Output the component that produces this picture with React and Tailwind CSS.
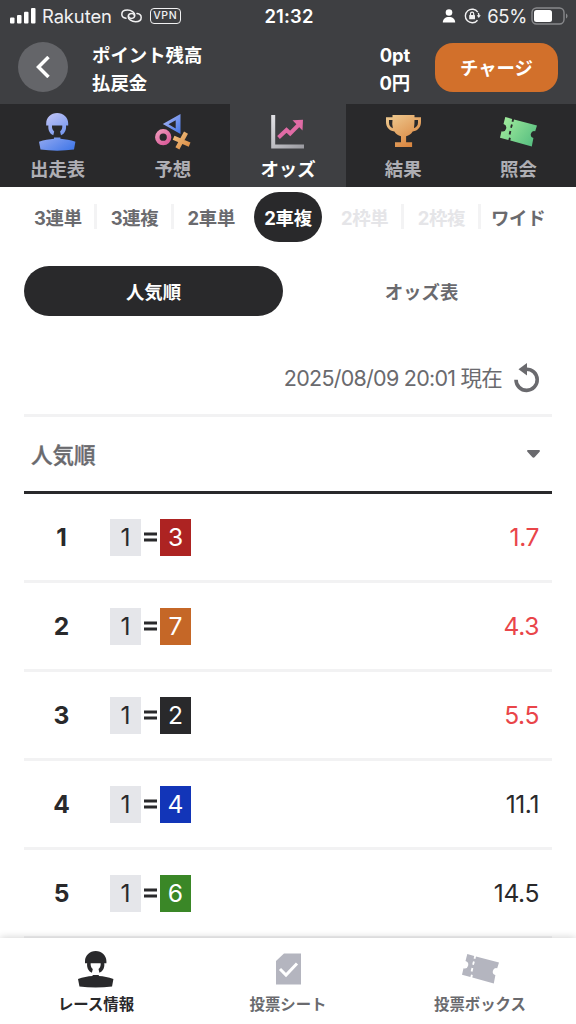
const tabs = [
  { label: "出走表", icon: RiderIcon },
  { label: "予想", icon: PredictIcon },
  { label: "オッズ", icon: OddsIcon, active: true },
  { label: "結果", icon: TrophyIcon },
  { label: "照会", icon: TicketIcon },
];

const betTypes = [
  { label: "3連単", divider: true },
  { label: "3連複", divider: true },
  { label: "2車単" },
  { label: "2車複", active: true },
  { label: "2枠単", disabled: true, divider: true },
  { label: "2枠複", disabled: true, divider: true },
  { label: "ワイド" },
];

const odds = [
  { rank: 1, second: 3, value: "1.7", color: "bg-[#ad2322]", hot: true },
  { rank: 2, second: 7, value: "4.3", color: "bg-[#c56727]", hot: true },
  { rank: 3, second: 2, value: "5.5", color: "bg-[#29292b]", hot: true },
  { rank: 4, second: 4, value: "11.1", color: "bg-[#1235b8]" },
  { rank: 5, second: 6, value: "14.5", color: "bg-[#3a8727]" },
];

function RiderShape({ fill }) {
  return (
    <g fill={fill}>
      <path d="M7.200 12.500V10.500C7.200 4.500 12 0 18.200 0s11 4.500 11 10.500v2H27c.5 4-1 8.200-5 9.800l-.9-3.800c1.700-1.400 2.400-3.400 2.200-6H13c-.2 2.600.5 4.600 2.200 6l-.9 3.800C10.400 20.700 8.900 16.500 9.400 12.500z" />
      <path d="M15 24.600h6.400v1.200c5 .4 9.800 1.200 15 3L35 36.500C24 38 12.200 38 1.500 36.500L0 28.800c5.200-1.800 10-2.600 15-3z" />
    </g>
  );
}

function RiderIcon() {
  return (
    <svg width="37" height="38" viewBox="0 0 37 38">
      <defs>
        <linearGradient id="rider" x1="6" y1="0" x2="30" y2="38" gradientUnits="userSpaceOnUse">
          <stop offset="0.1" stopColor="#b9c0f6" />
          <stop offset="1" stopColor="#4479e8" />
        </linearGradient>
      </defs>
      <RiderShape fill="url(#rider)" />
    </svg>
  );
}

function PredictIcon() {
  return (
    <svg width="36" height="36" viewBox="0 0 36 36" fill="none">
      <defs>
        <linearGradient id="tri" x1="8" y1="4" x2="26" y2="20" gradientUnits="userSpaceOnUse">
          <stop stopColor="#a9b5f5" />
          <stop offset="1" stopColor="#3f73e4" />
        </linearGradient>
        <linearGradient id="ring" x1="2" y1="14" x2="16" y2="32" gradientUnits="userSpaceOnUse">
          <stop stopColor="#f0a0be" />
          <stop offset="1" stopColor="#d74d92" />
        </linearGradient>
        <linearGradient id="cross" x1="20" y1="18" x2="34" y2="34" gradientUnits="userSpaceOnUse">
          <stop stopColor="#f0c283" />
          <stop offset="1" stopColor="#dc8b43" />
        </linearGradient>
      </defs>
      <path d="M7.800 10 25.500 0v20zM13.500 10.200l7.200 4.200V6.200z" fill="url(#tri)" fillRule="evenodd" />
      <circle cx="8.200" cy="23.200" r="5.900" stroke="url(#ring)" strokeWidth="4.500" />
      <path d="M18.600 23.800 34.600 30.600M31 18.600 22.400 34.400" stroke="url(#cross)" strokeWidth="4.500" />
    </svg>
  );
}

function OddsIcon() {
  return (
    <svg width="34" height="34" viewBox="0 0 34 34" fill="none">
      <defs>
        <linearGradient id="axis" x1="0" y1="0" x2="33" y2="34" gradientUnits="userSpaceOnUse">
          <stop stopColor="#e4e4e8" />
          <stop offset="1" stopColor="#98989e" />
        </linearGradient>
      </defs>
      <path d="M2.200 0v31.500H33" stroke="url(#axis)" strokeWidth="4" />
      <path d="m7.500 22.500 8-7.500 3.700 3.500L29 8.500" stroke="#e06ba5" strokeWidth="4" />
      <path d="M21.500 5.200 32 4.700 31.500 15.500z" fill="#e06ba5" />
    </svg>
  );
}

function TrophyIcon() {
  return (
    <svg width="35" height="33" viewBox="0 0 35 33">
      <defs>
        <linearGradient id="cup" x1="6" y1="0" x2="26" y2="32" gradientUnits="userSpaceOnUse">
          <stop stopColor="#edc78d" />
          <stop offset="1" stopColor="#d9833d" />
        </linearGradient>
      </defs>
      <path
        fill="url(#cup)"
        fillRule="evenodd"
        d="M6.500 0h22v2.200H35V7c0 5-3 8.700-8.300 9.500-1.500 2.500-3.700 4-6.600 4.700v6h6V32H9v-4.800h6v-6c-3-.7-5.100-2.200-6.600-4.700C3 15.700 0 12 0 7V2.200h6.500zM3 5v2.500c0 2.700 1.300 4.700 3.900 5.700A18 18 0 0 1 6.500 5zm25.500 0c0 3-.1 5.700-.6 8.200 2.700-1 4.100-3 4.100-5.700V5z"
      />
    </svg>
  );
}

function TicketShape({ fill }) {
  return (
    <path
      fill={fill}
      d="M5.300 0l6.900 1.900-.6 2.500 1.800.5.600-2.500L37 8.600l-1.800 5.600a3.500 3.500 0 0 0-1.800 6.800L31.800 29.500 10.300 23.600l.5-2.500-1.800-.5-.6 2.500L0 20.800l1.500-6.500a3.700 3.700 0 0 0 2-7.200zM11 7.300l-.8 3.200 1.700.5.900-3.200zM9.500 13.800l-.8 3.400 1.800.5.800-3.400z"
      fillRule="evenodd"
    />
  );
}

function TicketIcon() {
  return (
    <svg width="37" height="30" viewBox="0 0 37 30">
      <defs>
        <linearGradient id="ticket" x1="2" y1="4" x2="34" y2="28" gradientUnits="userSpaceOnUse">
          <stop stopColor="#a0eb9c" />
          <stop offset="1" stopColor="#55bd80" />
        </linearGradient>
      </defs>
      <TicketShape fill="url(#ticket)" />
    </svg>
  );
}

function StatusBar() {
  return (
    <div className="flex h-8 items-center pr-2 pl-2.5 text-[#f1f1f2]">
      <div className="flex flex-1 items-center">
        <svg width="26" height="16" viewBox="0 0 26 16" fill="#ffffff">
          <rect x="0" y="9.500" width="4.500" height="6" rx="1" />
          <rect x="7" y="7" width="4.500" height="8.500" rx="1" />
          <rect x="14" y="3.800" width="4.500" height="11.700" rx="1" />
          <rect x="21" y="0" width="4.500" height="15.500" rx="1" />
        </svg>
        <span className="ml-1.5 pt-px text-[18.400px] tracking-[-0.100px]">Rakuten</span>
        <svg className="ml-[9px]" width="21" height="14" viewBox="0 0 21 14" fill="none" stroke="currentColor" strokeWidth="1.500" strokeLinecap="round">
          <path d="M5 9.200C2.300 8.900.8 7.300.8 5.300c0-2.500 2.300-4.200 5.600-4.200 4 0 7.400 2.300 7.400 5 0 2-1.500 3.300-3.500 3.300-1.700 0-2.600-.9-2.600-2.200" />
          <path d="M16 4.600c2.700.3 4.200 1.900 4.200 3.900 0 2.500-2.300 4.200-5.600 4.200-4 0-7.400-2.300-7.400-5 0-2 1.500-3.300 3.500-3.300 1.700 0 2.600.9 2.600 2.200" />
        </svg>
        <span className="ml-2 flex h-4 w-[31px] items-center justify-center rounded-[4px] border-[1.500px] border-current text-[10.500px] font-medium tracking-[0.700px]">
          VPN
        </span>
      </div>
      <span className="pt-px text-[18.400px] font-semibold tracking-[0.200px] text-white">21:32</span>
      <div className="flex flex-1 items-center justify-end">
        <svg width="14" height="14" viewBox="0 0 14 14" fill="#ffffff">
          <circle cx="7" cy="3.500" r="3.300" />
          <path d="M.8 13.500c0-3.500 2.500-5.500 6.200-5.500s6.200 2 6.200 5.500z" />
        </svg>
        <svg className="ml-2" width="17" height="16" viewBox="0 0 17 16" fill="none" stroke="currentColor" strokeWidth="1.400">
          <path d="M13.800 4.200A6.800 6.800 0 1 0 13.500 12.200M14.300 5c.5 1 .7 2 .6 3" />
          <path d="m12.800 7.200 4 0-2 2.800z" fill="currentColor" stroke="none" />
          <rect x="5.200" y="7" width="5.800" height="4.300" rx="0.600" fill="currentColor" stroke="none" />
          <path d="M6.500 7.200V5.700a1.600 1.600 0 0 1 3.200 0v1.500" strokeWidth="1.200" />
        </svg>
        <span className="ml-1.5 pt-px text-[18.400px] tracking-[-0.300px]">65%</span>
        <svg className="ml-1" width="37" height="18" viewBox="0 0 37 18">
          <rect x="1" y="1" width="32" height="16" rx="4.500" fill="none" stroke="#88898c" strokeWidth="1.400" />
          <rect x="3" y="3" width="18" height="12" rx="2.500" fill="#ffffff" />
          <path d="M35 6.500c2 .8 2 4.200 0 5z" fill="#88898c" />
        </svg>
      </div>
    </div>
  );
}

function Header() {
  return (
    <header className="flex h-[72px] items-center pr-[18px] pb-0.5 pl-[18px] text-[18.400px] leading-7 font-bold text-white">
      <button className="flex size-[50px] items-center justify-center rounded-full bg-[#646569]">
        <svg width="14" height="22" viewBox="0 0 14 22" fill="none" stroke="#ffffff" strokeWidth="3.500">
          <path d="M12.500 1 2.500 11l10 10" />
        </svg>
      </button>
      <div className="ml-6 flex-1 pt-[3px]">
        <p>ポイント残高</p>
        <p>払戻金</p>
      </div>
      <div className="mr-[25px] pt-[3px] text-right tracking-[-0.200px]">
        <p>0pt</p>
        <p>0円</p>
      </div>
      <button className="h-[49px] w-[123px] rounded-[18px] bg-[#d2702b] pt-0.5">チャージ</button>
    </header>
  );
}

function MainTabs() {
  return (
    <nav className="grid h-[83px] grid-cols-5 bg-[#29292b]">
      {tabs.map(({ label, icon: Icon, active }) => (
        <button
          key={label}
          className={
            active
              ? "flex flex-col items-center bg-[#3e3f42] pt-2 text-white"
              : "flex flex-col items-center pt-2 text-[#aeaeb4]"
          }
        >
          <span className="flex h-[39px] items-center">
            <Icon />
          </span>
          <span className="mt-1 text-[18.400px] leading-7 font-bold">{label}</span>
        </button>
      ))}
    </nav>
  );
}

function BetTypes() {
  return (
    <div className="mx-auto mt-[5px] flex h-[50px] w-[537px] items-center text-[18.400px] font-bold text-[#6a6a6e]">
      {betTypes.map(({ label, active, disabled, divider }) => (
        <div key={label} className="relative flex flex-1 items-center justify-center">
          {active ? (
            <span className="flex h-[50px] w-[68px] shrink-0 items-center justify-center rounded-[25px] bg-[#29292b] pt-[3px] tracking-[-0.300px] text-white">
              {label}
            </span>
          ) : (
            <span className={disabled ? "pt-[3px] tracking-[-0.300px] text-[#e5e5e8]" : "pt-[3px] tracking-[-0.300px]"}>
              {label}
            </span>
          )}
          {divider && <i className="absolute -right-px h-[25px] w-[3px] bg-[#f3f3f4]" />}
        </div>
      ))}
    </div>
  );
}

function OddsRow({ rank, second, value, color, hot }) {
  return (
    <li className="flex h-[89px] shrink-0 items-center border-b-[3px] border-[#f2f2f3] text-[24.600px] text-[#29292b]">
      <span className="w-[75px] pt-px text-center font-bold">{rank}</span>
      <div className="ml-[11px] flex items-center">
        <span className="flex h-[37px] w-[31px] items-center justify-center bg-[#e5e6ea]">1</span>
        <svg className="mx-[3px]" width="13" height="11" viewBox="0 0 13 11" fill="#29292b">
          <rect width="13" height="3" y="0.500" />
          <rect width="13" height="3" y="6.500" />
        </svg>
        <span className={`flex h-[37px] w-[31px] items-center justify-center text-white ${color}`}>{second}</span>
      </div>
      <span
        className={
          hot
            ? "ml-auto pt-px pr-[13px] tracking-[-0.400px] text-[#e94549]"
            : "ml-auto pt-px pr-[13px] tracking-[-0.400px]"
        }
      >
        {value}
      </span>
    </li>
  );
}

function BottomNav() {
  return (
    <nav className="relative grid h-[86px] shrink-0 grid-cols-3 bg-white text-[15.400px] font-bold text-[#6a6a6e] shadow-[0_0_8px_rgba(0,0,0,0.200)]">
      <button className="flex flex-col items-center pt-3 text-[#29292b]">
        <svg width="36" height="39" viewBox="0 -1 37 40">
          <RiderShape fill="#29292b" />
        </svg>
        <span className="mt-1 leading-6">レース情報</span>
      </button>
      <button className="flex flex-col items-center pt-3">
        <svg width="25" height="39" viewBox="0 0 25 39">
          <path d="M8 3.500h17v31H0V11z" fill="#b4b5bf" />
          <path d="m4 19 6 6L21 13.500" fill="none" stroke="#ffffff" strokeWidth="3" />
        </svg>
        <span className="mt-1 leading-6">投票シート</span>
      </button>
      <button className="flex flex-col items-center pt-3">
        <svg width="37" height="39" viewBox="0 -4 37 39">
          <TicketShape fill="#b4b5bf" />
        </svg>
        <span className="mt-1 leading-6">投票ボックス</span>
      </button>
    </nav>
  );
}

export default function App() {
  return (
    <div className="flex h-screen w-full flex-col overflow-hidden bg-white font-['Inter','Noto_Sans_CJK_JP',sans-serif]">
      <div className="shrink-0 bg-[#3e3f42]">
        <StatusBar />
        <Header />
        <MainTabs />
      </div>

      <main className="min-h-0 flex-1 overflow-hidden">
        <BetTypes />

        <div className="mx-6 mt-6 grid h-[50px] grid-cols-[259px_1fr] text-[18.400px] font-bold text-[#6a6a6e]">
          <button className="rounded-full bg-[#29292b] pt-[3px] text-white">人気順</button>
          <button className="pt-[3px] pl-2">オッズ表</button>
        </div>

        <section className="mx-6">
          <div className="mt-[25px] flex h-[76px] items-center justify-end border-b-[3px] border-[#f2f2f3] pr-3 text-[21.500px] text-[#6a6a6e]">
            <span className="pt-0.5 tracking-[-0.750px] whitespace-pre">2025/08/09 20:01 現在</span>
            <svg className="ml-3" width="26" height="30" viewBox="0 0 26 30" fill="none">
              <path d="M12 6.200A10.600 10.600 0 1 1 2 16.800" stroke="#6a6a6e" strokeWidth="3.600" />
              <path d="M4.500 6.300 13 0v12.500z" fill="#6a6a6e" />
            </svg>
          </div>
          <button className="flex h-[77px] w-full items-center justify-between border-b-[3px] border-[#29292b] pr-3 pl-[7px] text-[21.500px] font-medium text-[#6a6a6e]">
            <span className="pt-0.5 [-webkit-text-stroke:0.400px]">人気順</span>
            <svg width="13" height="8" viewBox="0 0 13 8" fill="#6a6a6e">
              <path d="M1.200 0h10.600c1 0 1.500 1 .8 1.700L7.800 7c-.8.900-1.800.9-2.600 0L.4 1.700C-.3 1 .2 0 1.200 0z" />
            </svg>
          </button>
          <ul>
            {odds.map((row) => (
              <OddsRow key={row.rank} {...row} />
            ))}
          </ul>
        </section>
      </main>

      <BottomNav />
    </div>
  );
}
